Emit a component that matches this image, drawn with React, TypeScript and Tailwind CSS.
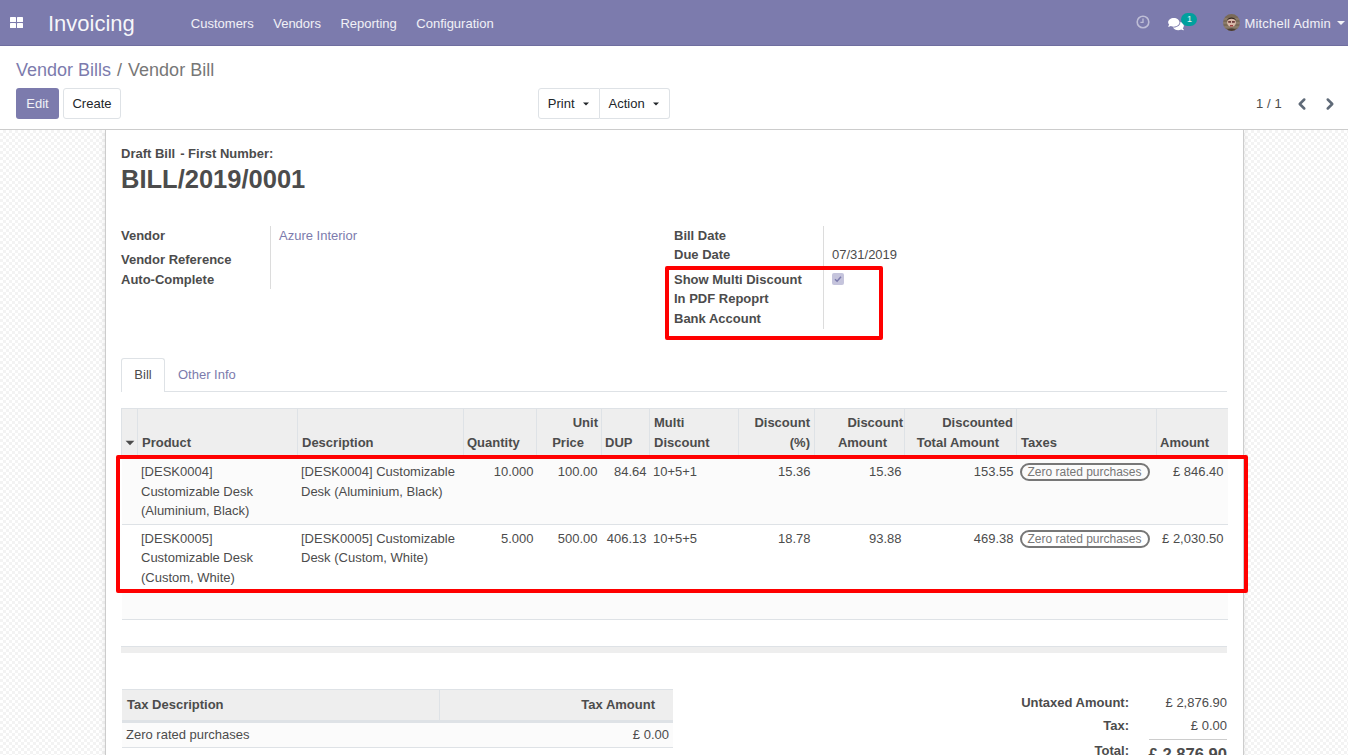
import React from "react";
import { ChevronLeft, ChevronRight } from "lucide-react";
import { FaComments } from "react-icons/fa";

const font = "font-['Liberation_Sans',Arial,sans-serif]";

function Caret({ className = "" }: { className?: string }) {
  return <span className={`inline-block w-0 h-0 border-x-[4px] border-x-transparent border-t-[4px] border-t-current ${className}`} />;
}

function Navbar() {
  return (
    <header className="h-[46px] shrink-0 bg-[#7c7bad] border-b border-[#6f6e9f] flex items-center text-white/90 text-[13px]">
      <svg className="ml-[10px] w-[13px] h-[11px]" viewBox="0 0 13 11" fill="white">
        <rect x="0" y="0" width="6" height="5" rx="0.6" />
        <rect x="7" y="0" width="6" height="5" rx="0.6" />
        <rect x="0" y="6" width="6" height="5" rx="0.6" />
        <rect x="7" y="6" width="6" height="5" rx="0.6" />
      </svg>
      <span className="ml-[25px] text-[22px] leading-none font-normal text-white/95 translate-y-[0.5px]">Invoicing</span>
      <nav className="ml-[56px] flex gap-[19.5px] translate-y-px">
        <span>Customers</span>
        <span>Vendors</span>
        <span>Reporting</span>
        <span>Configuration</span>
      </nav>
      <div className="ml-auto flex items-center">
        <svg className="w-[14px] h-[14px] text-white/50 -translate-y-px" viewBox="0 0 14 14" fill="none" stroke="currentColor" strokeWidth="1.6">
          <circle cx="7" cy="7" r="5.8" />
          <path d="M7 3.6V7.4H4.4" strokeWidth="1.3" />
        </svg>
        <div className="relative ml-[18px] mr-[39px] h-[14px]">
          <FaComments className="block text-white w-[16px] h-[14px] translate-y-px" />
          <span className="absolute left-[13px] top-[-3px] w-[16px] h-[13px] rounded-full bg-[#00a09d] text-[9px] leading-[13px] text-center">1</span>
        </div>
        <svg className="w-[17px] h-[17px] rounded-full" viewBox="0 0 17 17">
          <rect width="17" height="17" fill="#7a6a58" />
          <path d="M0 5H17M0 9H17M0 13H17" stroke="#a39684" strokeWidth="0.8" />
          <circle cx="8.5" cy="8.5" r="4.4" fill="#d9b8a8" />
          <path d="M4 6C5 2.5 12 2.5 13 6L11.5 5.5C10 4.5 7 4.5 5.5 5.5Z" fill="#33261f" />
          <rect x="5.2" y="7" width="2.8" height="1.8" fill="#6d3b3b" />
          <rect x="9" y="7" width="2.8" height="1.8" fill="#6d3b3b" />
          <path d="M7 11H10V12.5H7Z" fill="#9c3f3f" />
          <path d="M3 17C4 13.5 13 13.5 14 17Z" fill="#4a3b32" />
        </svg>
        <span className="ml-[4px] tracking-[0.2px] translate-y-px">Mitchell Admin</span>
        <Caret className="ml-[6px] mr-[3px]" />
      </div>
    </header>
  );
}

function ControlPanel() {
  return (
    <div className="h-[84px] shrink-0 bg-white border-b border-[#cccccc] px-[16px] pt-[14px] relative z-10">
      <div className="text-[18px] leading-[21px] text-[#777777]">
        <span className="text-[#7c7bad]">Vendor Bills</span>
        <span className="mx-[6px]">/</span>
        <span>Vendor Bill</span>
      </div>
      <div className="mt-[7px] grid grid-cols-3 items-center text-[13px]">
        <div className="flex gap-[4px]">
          <button className="w-[43px] h-[31px] rounded-[3px] bg-[#7c7bad] text-white/90">Edit</button>
          <button className="w-[58px] h-[31px] rounded-[3px] border border-[#dee2e6] text-[#212529]">Create</button>
        </div>
        <div className="flex ml-[83px] text-[#212529]">
          <button className="w-[62px] h-[31px] rounded-l-[3px] border border-[#dee2e6] flex items-center justify-center gap-[7px]">
            Print <Caret className="scale-75" />
          </button>
          <button className="w-[70px] h-[31px] rounded-r-[3px] border border-l-0 border-[#dee2e6] flex items-center justify-center gap-[7px]">
            Action <Caret className="scale-75" />
          </button>
        </div>
        <div className="flex items-center justify-end text-[#4c4c4c]">
          <span className="tracking-[0.15px]">1 / 1</span>
          <ChevronLeft className="ml-[11px] w-[18px] h-[18px] text-[#5f6a78]" strokeWidth={3.4} />
          <ChevronRight className="ml-[10px] mr-[-7px] w-[18px] h-[18px] text-[#5f6a78]" strokeWidth={3.4} />
        </div>
      </div>
    </div>
  );
}

function Field({ label, value, labelClass = "" }: { label: string; value?: React.ReactNode; labelClass?: string }) {
  return (
    <>
      <div className={`font-bold whitespace-nowrap ${labelClass}`}>{label}</div>
      <div className="border-l border-[#dcdcdc] pl-[8px] min-h-[19px]">{value}</div>
    </>
  );
}

function FormGroups() {
  return (
    <div className="mt-[31px] grid grid-cols-[553px_1fr] leading-[19.5px]">
      <div className="grid grid-cols-[149px_1fr] self-start">
        <Field label="Vendor" value={<span className="text-[#7c7bad]">Azure Interior</span>} />
        <div className="font-bold pt-[4px]">Vendor Reference</div>
        <div className="border-l border-[#dcdcdc] h-[24px]" />
        <Field label="Auto-Complete" />
      </div>
      <div className="grid grid-cols-[149px_1fr] grid-rows-[19px_19px_auto_auto] self-start">
        <Field label="Bill Date" />
        <Field label="Due Date" value="07/31/2019" />
        <div className="font-bold pt-[6px] leading-[19px]">
          Show Multi Discount
          <br />
          In PDF Repoprt
        </div>
        <div className="border-l border-[#dcdcdc] pl-[8px] pt-[9px]">
          <span className="flex items-center justify-center w-[12px] h-[12px] rounded-[2px] bg-[#c5c4dc]">
            <svg className="w-[8px] h-[8px]" viewBox="0 0 8 8" fill="none" stroke="#7c7bad" strokeWidth="1.5">
              <path d="M1 4.2 3.1 6.2 7 1.8" />
            </svg>
          </span>
        </div>
        <Field label="Bank Account" labelClass="pt-px" />
      </div>
    </div>
  );
}

type Line = {
  product: string[];
  description: string[];
  quantity: string;
  price: string;
  dup: string;
  multi: string;
  pct: string;
  discount: string;
  total: string;
  amount: string;
};

const lines: Line[] = [
  {
    product: ["[DESK0004]", "Customizable Desk", "(Aluminium, Black)"],
    description: ["[DESK0004] Customizable", "Desk (Aluminium, Black)"],
    quantity: "10.000",
    price: "100.00",
    dup: "84.64",
    multi: "10+5+1",
    pct: "15.36",
    discount: "15.36",
    total: "153.55",
    amount: "£ 846.40",
  },
  {
    product: ["[DESK0005]", "Customizable Desk", "(Custom, White)"],
    description: ["[DESK0005] Customizable", "Desk (Custom, White)"],
    quantity: "5.000",
    price: "500.00",
    dup: "406.13",
    multi: "10+5+5",
    pct: "18.78",
    discount: "93.88",
    total: "469.38",
    amount: "£ 2,030.50",
  },
];

const th = "border border-[#dee2e6] border-b-0 px-[4px] pb-[5px] pt-[4px] align-bottom font-bold leading-[20px]";
const td = "px-[4px] pt-[4px] pb-[4px] align-top leading-[19.5px]";

function LinesTable() {
  return (
    <table className="w-full table-fixed border-collapse text-[13px]">
      <colgroup>
        {[16, 160, 166, 73, 65, 48, 89, 76, 90, 112, 140, 71].map((w, i) => (
          <col key={i} style={{ width: w }} />
        ))}
      </colgroup>
      <thead>
        <tr className="bg-[#eeeeee] h-[49px]">
          <th className={`${th} !px-0 text-center`}><Caret className="scale-110 translate-y-[-2px]" /></th>
          <th className={`${th} text-left`}>Product</th>
          <th className={`${th} text-left`}>Description</th>
          <th className={`${th} text-left !pl-[3px]`}>Quantity</th>
          <th className={`${th} text-right !pr-[3px]`}>Unit<br /><span className="pr-[14px]">Price</span></th>
          <th className={`${th} text-left !pl-[3px]`}>DUP</th>
          <th className={`${th} text-left`}>Multi<br />Discount</th>
          <th className={`${th} text-right`}>Discount<br />(%)</th>
          <th className={`${th} text-right !pr-[1px]`}>Discount<br /><span className="pr-[16px]">Amount</span></th>
          <th className={`${th} text-right !pr-[3px]`}>Discounted<br /><span className="pr-[14px]">Total Amount</span></th>
          <th className={`${th} text-left`}>Taxes</th>
          <th className={`${th} text-left !pl-[3px] !border-r-0`}>Amount</th>
        </tr>
      </thead>
      <tbody>
        {lines.map((l, i) => {
          const nudge = i === 0 ? "!pt-[4.5px]" : "!pt-[3.7px]";
          return (
            <tr key={i} className={`${i === 0 ? "bg-[#fbfbfb]" : "bg-white"} border-b border-[#dee2e6] h-[67px]`}>
              <td />
              <td className={`${td} ${nudge} !pb-0 !pl-[3.5px]`}>{l.product.map((t) => <div key={t} className="whitespace-nowrap">{t}</div>)}</td>
              <td className={`${td} ${nudge} !pb-0 !pl-[3.5px]`}>{l.description.map((t) => <div key={t} className="whitespace-nowrap">{t}</div>)}</td>
              <td className={`${td} text-right !pr-[3px]`}>{l.quantity}</td>
              <td className={`${td} text-right`}>{l.price}</td>
              <td className={`${td} text-right !pr-[3px] !pl-0`}>{l.dup}</td>
              <td className={`${td} !pl-[3.5px]`}>{l.multi}</td>
              <td className={`${td} text-right`}>{l.pct}</td>
              <td className={`${td} text-right !pr-[3px]`}>{l.discount}</td>
              <td className={`${td} text-right !pr-[3px]`}>{l.total}</td>
              <td className={`${td} !pl-[3px]`}>
                <span className="block mt-px w-[130px] h-[18px] rounded-full border-2 border-[#777777] text-[12px] leading-[14px] text-center text-[#777777] whitespace-nowrap">
                  Zero rated purchases
                </span>
              </td>
              <td className={`${td} text-right !pl-0`}>{l.amount}</td>
            </tr>
          );
        })}
        <tr className="bg-[#fbfbfb] border-b border-[#dee2e6] h-[28px]"><td colSpan={12} /></tr>
      </tbody>
    </table>
  );
}

function Totals() {
  return (
    <div className="mt-[36px] flex items-start justify-between">
      <table className="ml-px w-[551px] table-fixed border-collapse">
        <thead>
          <tr className="bg-[#eeeeee] h-[32px] border-t border-[#dee2e6] border-b-[3px]">
            <th className="w-[317px] border-r border-[#dee2e6] text-left font-bold pl-[5px]">Tax Description</th>
            <th className="text-right font-bold pr-[18px]">Tax Amount</th>
          </tr>
        </thead>
        <tbody>
          <tr className="bg-[#fbfbfb] h-[26px] border-b border-[#dee2e6]">
            <td className="pl-[4px]">Zero rated purchases</td>
            <td className="text-right pr-[4px]">£ 0.00</td>
          </tr>
        </tbody>
      </table>
      <div className="grid grid-cols-[auto_78px] gap-x-[20px] justify-end text-right leading-[20px] pt-[4px]">
        <div className="font-bold">Untaxed Amount:</div>
        <div>£ 2,876.90</div>
        <div className="font-bold mt-[3px]">Tax:</div>
        <div className="mt-[3px]">£ 0.00</div>
        <div className="font-bold mt-[5px]">Total:</div>
        <div className="mt-[3px] border-t border-[#cccccc] pt-[4px] font-bold text-[16.6px] leading-[22px] whitespace-nowrap flex justify-end">£ 2,876.90</div>
      </div>
    </div>
  );
}

function Sheet() {
  return (
    <div className="relative w-[1139px] ml-[105px] bg-white border-x border-[#cccccc] shadow-[0_0_6px_rgba(0,0,0,0.1)] pl-[15px] pr-[16px] pt-[16px] pb-[40px] text-[13px] text-[#4c4c4c]">
      <div className="font-bold leading-[15px]">Draft Bill<span className="ml-[5px]">- First Number:</span></div>
      <h1 className="mt-[2px] text-[25.5px] leading-[32px] font-bold">BILL/2019/0001</h1>
      <FormGroups />
      <div className="mt-[29px] flex h-[34px] border-b border-[#dee2e6]">
        <div className="w-[44px] h-[34px] bg-white border border-b-0 border-[#dee2e6] rounded-t-[3px] flex items-center justify-center">Bill</div>
        <div className="ml-[13px] flex items-center text-[#7c7bad] translate-y-px">Other Info</div>
      </div>
      <div className="mt-[16px]">
        <LinesTable />
      </div>
      <div className="mt-[26px] h-[7px] bg-[#eeeeee] border-t border-[#dee2e6]" />
      <Totals />
      {/* red highlight boxes from the screenshot */}
      <div className="absolute left-[559px] top-[136px] w-[218px] h-[74px] border-[4px] border-[#ff0000] rounded-[2px]" />
      <div className="absolute left-[10px] top-[325px] w-[1132px] h-[138px] border-[4px] border-[#ff0000] rounded-[2px]" />
    </div>
  );
}

export default function App() {
  return (
    <div className={`${font} h-[755px] w-[1348px] overflow-hidden flex flex-col`}>
      <Navbar />
      <ControlPanel />
      <main className="flex-1 overflow-hidden bg-[repeating-conic-gradient(#f3f3f3_0_25%,#ffffff_0_50%)] bg-[length:6px_6px]">
        <Sheet />
      </main>
    </div>
  );
}
